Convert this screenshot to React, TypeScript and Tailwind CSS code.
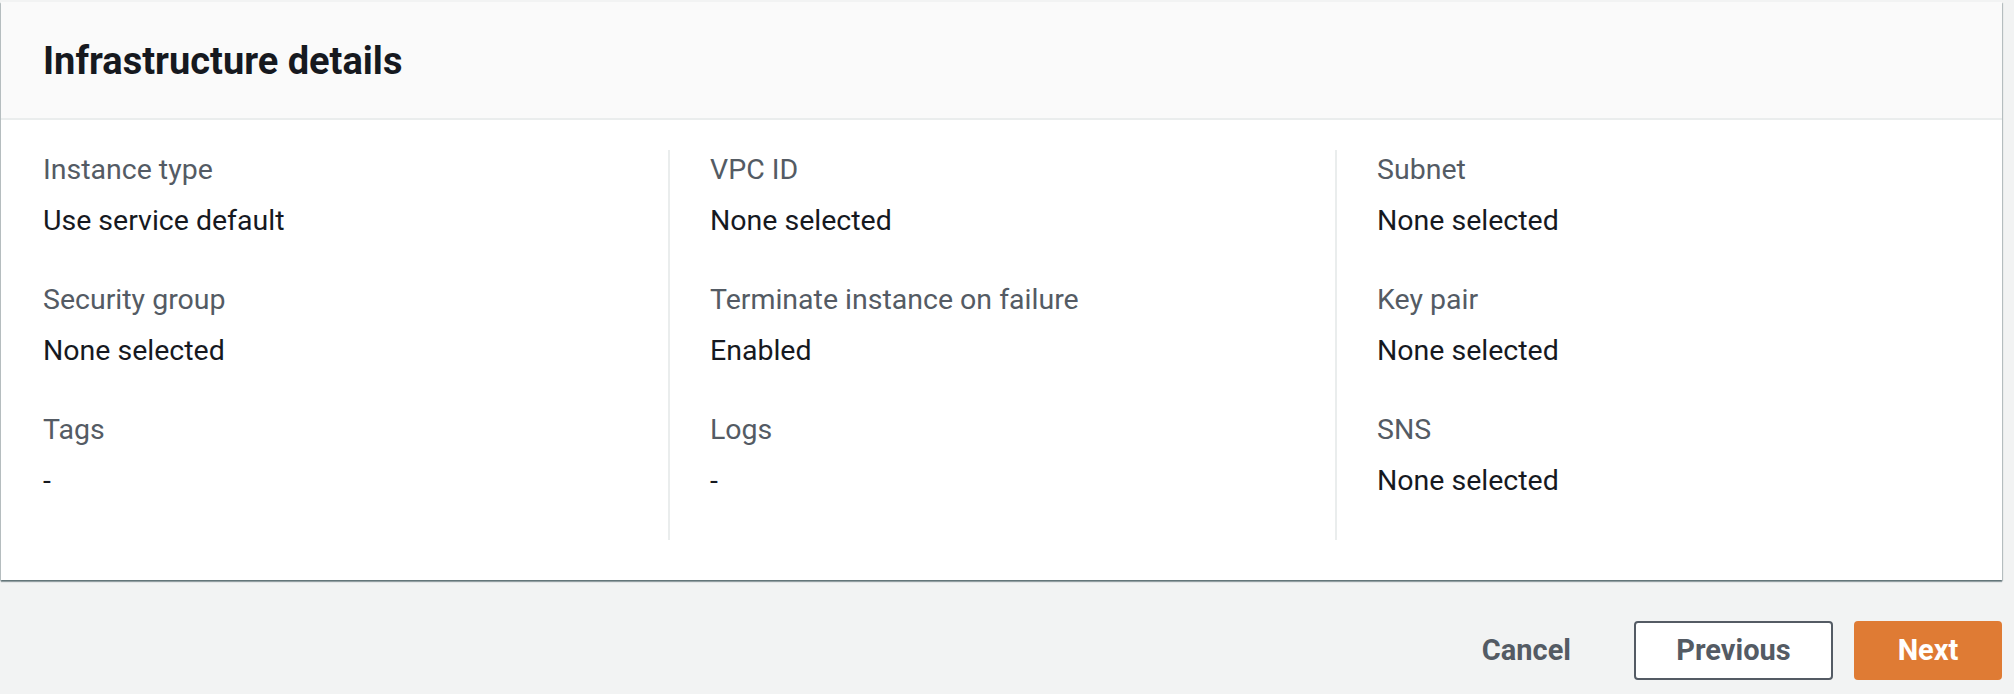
import React from "react";

type Item = { label: string; value: string };

const columns: Item[][] = [
  [
    { label: "Instance type", value: "Use service default" },
    { label: "Security group", value: "None selected" },
    { label: "Tags", value: "-" },
  ],
  [
    { label: "VPC ID", value: "None selected" },
    { label: "Terminate instance on failure", value: "Enabled" },
    { label: "Logs", value: "-" },
  ],
  [
    { label: "Subnet", value: "None selected" },
    { label: "Key pair", value: "None selected" },
    { label: "SNS", value: "None selected" },
  ],
];

export default function App() {
  return (
    <div
      className="min-h-[694px] w-full bg-[#f2f3f3] pt-[2px]"
      style={{ fontFamily: "Roboto, 'Liberation Sans', sans-serif" }}
    >
      <div className="ml-[1px] w-[2001px] bg-white shadow-[0_2px_1px_0_rgba(0,28,36,0.35),1px_1px_1px_0_rgba(0,28,36,0.2),-1px_1px_1px_0_rgba(0,28,36,0.2)]">
        <div className="flex h-[116px] items-center bg-[#fafafa] pl-[42px] pt-[2px]">
          <h2 className="text-[38px] font-bold leading-[46px] text-[#16191f]">
            Infrastructure details
          </h2>
        </div>
        <div className="h-[2px] bg-[#eaeded]" />
        <div className="grid grid-cols-3 pt-[30px] pb-[40px]">
          {columns.map((col, ci) => (
            <div
              key={ci}
              className={
                ci === 0
                  ? "flex flex-col pl-[42px]"
                  : "flex flex-col border-l-2 border-[#eaeded] pl-[40px]"
              }
            >
              {col.map((item, ri) => (
                <div key={ri} className="flex h-[130px] flex-col">
                  <div className="text-[28.5px] leading-[40px] text-[#545b64]">
                    {item.label}
                  </div>
                  <div className="mt-[11px] text-[28.5px] leading-[40px] text-[#16191f]">
                    {item.value}
                  </div>
                </div>
              ))}
            </div>
          ))}
        </div>
      </div>
      <div className="ml-[1px] mt-[41px] flex w-[2001px] justify-end gap-[21px]">
        <button className="flex h-[59px] items-center px-[42px] text-[29px] font-bold text-[#545b64]">
          Cancel
        </button>
        <button className="flex h-[59px] w-[199px] items-center justify-center rounded-[4px] border-2 border-[#545b64] bg-white text-[29px] font-bold text-[#545b64]">
          Previous
        </button>
        <button className="flex h-[59px] w-[148px] items-center justify-center rounded-[4px] bg-[#df7b34] text-[29px] font-bold text-white">
          Next
        </button>
      </div>
    </div>
  );
}
